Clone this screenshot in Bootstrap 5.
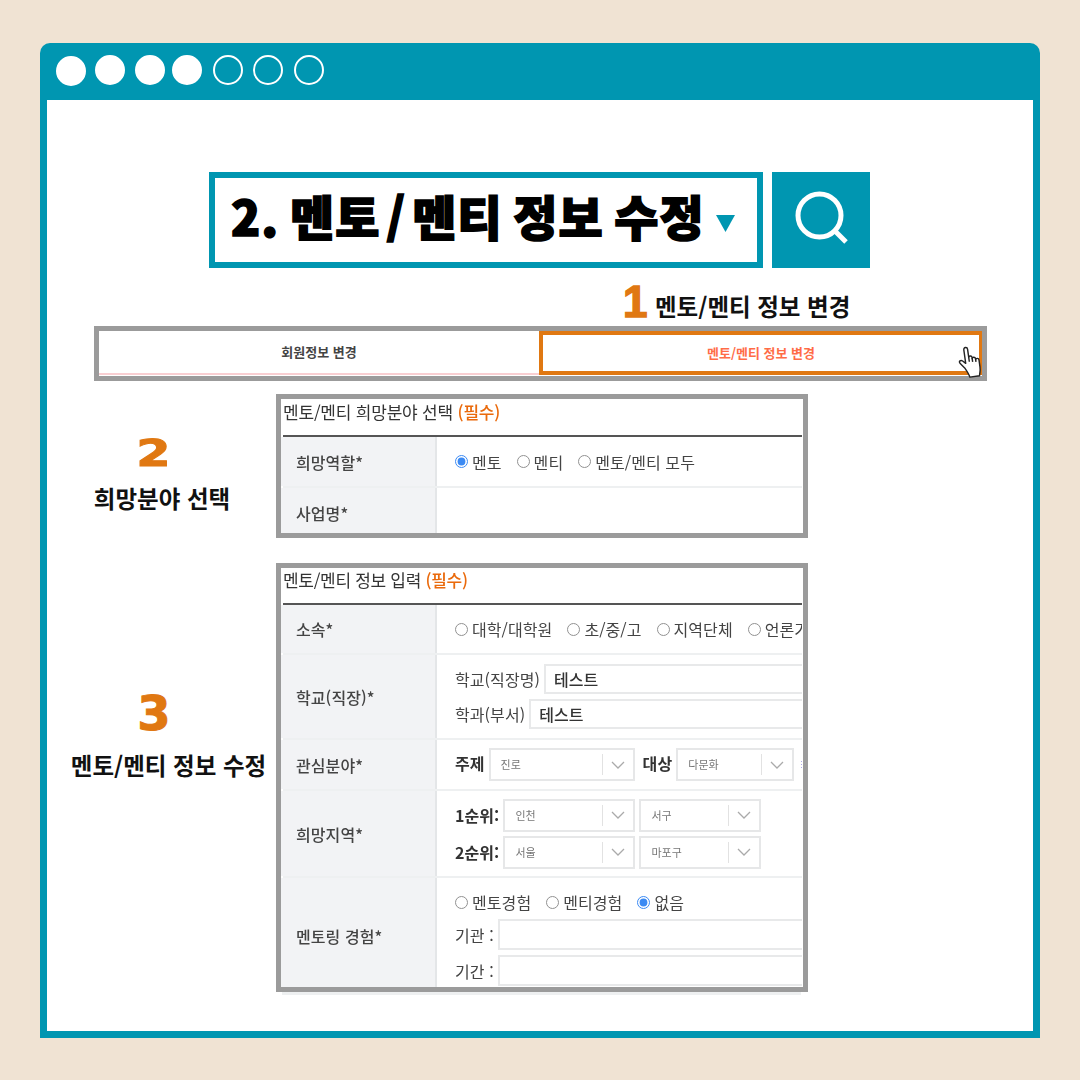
<!DOCTYPE html>
<html lang="ko">
<head>
<meta charset="utf-8">
<title>멘토/멘티 정보 수정</title>
<link href="https://cdn.jsdelivr.net/npm/bootstrap@5.3.0/dist/css/bootstrap.min.css" rel="stylesheet">
<style>
html,body{height:100%}
body{background:#f0e3d3;font-family:"Noto Sans CJK KR","Noto Sans",sans-serif;color:#333;overflow:hidden}
.frame{width:1000px;height:995px;margin:43px 0 0 40px;background:#0096b1;border-radius:10px 10px 0 0;padding:0 7px 7px}
.frame-bar{height:57px;padding:12px 0 0 9px;gap:10px}
.dot{width:30px;height:30px;border-radius:50%;background:#fff;border:2px solid #fff}
.dot.hollow{background:transparent}
.dot:nth-child(1){margin-top:1px}
.dot:nth-child(2){margin-left:-1px}
.dot:nth-child(4){margin-left:-3px}
.dot:nth-child(5),.dot:nth-child(7){margin-left:1px}
.sheet{height:931px;background:#fff;padding-top:72px}
.search-row{gap:9px;padding-right:1px}
.search-box{width:554px;height:96px;border:6px solid #0096b1;padding-left:16px}
.search-title{font-size:48px;font-weight:900;color:#000;letter-spacing:1.1px;word-spacing:-4px;-webkit-text-stroke:1.6px #000;line-height:1;white-space:nowrap;margin-top:-10px}
.slash{margin:0 6px}
.tri{width:19px;height:17px;margin-left:11px;margin-top:6px}
.search-btn{width:98px;height:96px;background:#0096b1}
.num{display:block;font-family:"DejaVu Sans",sans-serif;font-weight:700;color:#e07812;line-height:1;-webkit-text-stroke:1px #e07812}
.step-one{margin:17px 0 0 577px;height:41px}
.step-one .num{font-family:"Liberation Sans",sans-serif;font-size:44px;flex:none;width:31px;margin:-5px 1px 0 -1px;padding-right:30px;-webkit-text-stroke:1.5px #e07812}
.step-text{font-size:23.5px;font-weight:700;color:#111;line-height:1.2;white-space:nowrap}
.step-one .step-text{margin-top:7px}
.tab-bar{position:relative;width:893px;height:55px;margin-left:47px;border:5px solid #9b9b9b}
.tab-a,.tab-b{font-size:13px;font-weight:700;height:44px}
.tab-a{width:440px;color:#444;border-bottom:2px solid #f9cfd2}
.tab-b{flex:1;color:#ff6c47;border:4px solid #e07812;border-right-width:3px}
.hand{position:absolute;right:-4px;top:13px;width:29px;height:36px}
.form-line{margin-top:13px}
.form-line+.form-line{margin-top:25px}
.side{width:229px;text-align:center}
.side-a{padding-top:40px}
.side-a .num{font-size:38px;margin-right:16px;transform:scaleX(1.3)}
.side-a .step-text{margin-top:12px;padding-left:1px}
.side-b{padding-top:126px;padding-left:14px}
.side-b .num{font-size:48px;margin-right:29px}
.side-b .step-text{margin-top:14px}
.panel{width:532px;border:5px solid #9b9b9b;overflow:hidden;background:#fff}
.panel>*{filter:blur(.35px)}
.panel-a{height:144px}
.panel-b{height:429px}
.panel-title{height:36px;margin-left:2px;font-size:17px;letter-spacing:-.2px;line-height:26px;color:#333;white-space:nowrap}
.panel-b .panel-title{height:35px;line-height:24px;letter-spacing:-.3px}
.must{color:#ea6a0c;font-weight:500}
.rule{height:2px;background:#555;margin:0 1px 0 2px}
.frow{margin:0 1px 0 2px;border-bottom:2px solid #eef0f1;font-size:16px;letter-spacing:.08px;white-space:nowrap}
.fth{width:154px;flex:none;background:#f2f3f5;border-right:2px solid #e4e6e8;padding-left:13px;color:#444;font-weight:500;box-shadow:-2px 0 0 #f2f3f5}
.ftd{flex:1;min-width:0;padding-left:18px;overflow:hidden;color:#444}
.rh-50{height:50px}.rh-51{height:51px}.rh-85{height:85px}.rh-87{height:87px}
.frow.last{border-bottom:0;height:112px}
.frow.last .fth{padding-top:3px}
.frow.last .ftd{padding-top:12px}
.radio-set{gap:15px;height:24px}
.radio-item{gap:4px}
.radio-item input{width:13px;height:13px;margin:0;accent-color:#0b6df0;flex:none;opacity:.8}
.radio-item label{line-height:1}
.line-input{gap:4px;height:31px}
.fake-input{flex:1;min-width:320px;height:30px;border:2px solid #e8e9ea;border-right:0;padding-left:8px;line-height:26px;color:#333;font-weight:500}
.frow.last .fake-input{height:31px}
.gap-five{margin-bottom:5px}
.sel-row{gap:4px}
.pick{flex:none;height:33px;border:2px solid #e6e7e8;font-size:11px;color:#777;padding-left:10px}
.pick span{flex:1}
.pick i{display:block;width:1px;height:21px;background:#e2e2e2}
.pick svg{width:14px;height:8px;margin:0 8px}
.w-146{width:146px}.w-118{width:118px}.w-132{width:132px}.w-122{width:122px}
.bold-key{flex:none;font-weight:700;color:#333;font-size:16px}
.sel-top .bold-key{margin-top:-3px}
.stub{width:519px;height:3px;margin:0 6px;background:#eef0f1}
.tiny-dots{color:#a9a4e8;font-size:9px;margin-left:-1px}
</style>
</head>
<body>
<div class="frame">
  <div class="frame-bar d-flex align-items-start">
    <span class="dot"></span><span class="dot"></span><span class="dot"></span><span class="dot"></span>
    <span class="dot hollow"></span><span class="dot hollow"></span><span class="dot hollow"></span>
  </div>
  <div class="sheet">
    <div class="search-row d-flex justify-content-center">
      <div class="search-box d-flex align-items-center">
        <span class="search-title">2. 멘토<span class="slash">/</span>멘티 정보 수정</span>
        <svg class="tri" viewBox="0 0 19 17"><path d="M0 0H19L9.500 17Z" fill="#0096b1"/></svg>
      </div>
      <div class="search-btn d-flex align-items-center justify-content-center">
        <svg width="98" height="96" viewBox="0 0 98 96"><circle cx="47.500" cy="43.500" r="21.500" fill="none" stroke="#fff" stroke-width="5"/><path d="M63 59L74 70" stroke="#fff" stroke-width="5" fill="none"/></svg>
      </div>
    </div>

    <div class="step-one d-flex">
      <span class="num">1</span>
      <span class="step-text">멘토/멘티 정보 변경</span>
    </div>

    <div class="tab-bar d-flex">
      <div class="tab-a d-flex align-items-center justify-content-center">회원정보 변경</div>
      <div class="tab-b d-flex align-items-center justify-content-center">멘토/멘티 정보 변경</div>
      <svg class="hand" viewBox="0 0 26 33">
        <g transform="rotate(-8 13 16)" fill="#fff" stroke="#222" stroke-width="1.300" stroke-linejoin="round">
          <path d="M6 21L2.500 16.500C1 14 3.500 13 5 14.500L7.500 17V4.500C7.500 2 11 2 11 4.500V12C11 10.500 14 10.500 14 12.500V13.500C14 12 17 12 17 14V15C17 13.500 20 13.500 20 15.500V22C20 26 19 27 18.500 30H9.500C9 27 7.500 24 6 21Z"/>
          <path d="M11 12V16M14 13V16.500M17 14.500V17" fill="none"/>
        </g>
      </svg>
    </div>

    <div class="form-line d-flex">
      <div class="side side-a">
        <div class="num">2</div>
        <div class="step-text">희망분야 선택</div>
      </div>
      <div class="panel panel-a">
        <div class="panel-title">멘토/멘티 희망분야 선택 <span class="must">(필수)</span></div>
        <div class="rule"></div>
        <div class="frow rh-51 d-flex">
          <div class="fth d-flex align-items-center">희망역할*</div>
          <div class="ftd d-flex align-items-center">
            <div class="radio-set d-flex align-items-center">
              <div class="radio-item d-flex align-items-center"><input type="radio" name="r1" id="r11" checked><label for="r11">멘토</label></div>
              <div class="radio-item d-flex align-items-center"><input type="radio" name="r1" id="r12"><label for="r12">멘티</label></div>
              <div class="radio-item d-flex align-items-center"><input type="radio" name="r1" id="r13"><label for="r13">멘토/멘티 모두</label></div>
            </div>
          </div>
        </div>
        <div class="frow rh-51 d-flex">
          <div class="fth d-flex align-items-center">사업명*</div>
          <div class="ftd"></div>
        </div>
      </div>
    </div>

    <div class="form-line d-flex">
      <div class="side side-b">
        <div class="num">3</div>
        <div class="step-text">멘토/멘티 정보 수정</div>
      </div>
      <div>
        <div class="panel panel-b">
          <div class="panel-title">멘토/멘티 정보 입력 <span class="must">(필수)</span></div>
          <div class="rule"></div>
          <div class="frow rh-50 d-flex">
            <div class="fth d-flex align-items-center">소속*</div>
            <div class="ftd d-flex align-items-center">
              <div class="radio-set d-flex align-items-center">
                <div class="radio-item d-flex align-items-center"><input type="radio" name="r2"><label>대학/대학원</label></div>
                <div class="radio-item d-flex align-items-center"><input type="radio" name="r2"><label>초/중/고</label></div>
                <div class="radio-item d-flex align-items-center"><input type="radio" name="r2"><label>지역단체</label></div>
                <div class="radio-item d-flex align-items-center"><input type="radio" name="r2"><label>언론기관</label></div>
              </div>
            </div>
          </div>
          <div class="frow rh-85 d-flex">
            <div class="fth d-flex align-items-center">학교(직장)*</div>
            <div class="ftd d-flex flex-column justify-content-center gap-1">
              <div class="line-input d-flex align-items-center"><span>학교(직장명)</span><div class="fake-input">테스트</div></div>
              <div class="line-input d-flex align-items-center"><span>학과(부서)</span><div class="fake-input">테스트</div></div>
            </div>
          </div>
          <div class="frow rh-51 d-flex">
            <div class="fth d-flex align-items-center">관심분야*</div>
            <div class="ftd d-flex align-items-center sel-row sel-top">
              <span class="bold-key">주제</span>
              <div class="pick w-146 d-flex align-items-center"><span>진로</span><i></i><svg viewBox="0 0 14 8"><path d="M1 1L7 7L13 1" fill="none" stroke="#aaa" stroke-width="1.300"/></svg></div>
              <span class="bold-key ms-1">대상</span>
              <div class="pick w-118 d-flex align-items-center"><span>다문화</span><i></i><svg viewBox="0 0 14 8"><path d="M1 1L7 7L13 1" fill="none" stroke="#aaa" stroke-width="1.300"/></svg></div>
              <span class="tiny-dots">⋮</span>
            </div>
          </div>
          <div class="frow rh-87 d-flex">
            <div class="fth d-flex align-items-center">희망지역*</div>
            <div class="ftd d-flex flex-column justify-content-center gap-1">
              <div class="d-flex align-items-center sel-row">
                <span class="bold-key">1순위:</span>
                <div class="pick w-132 d-flex align-items-center"><span>인천</span><i></i><svg viewBox="0 0 14 8"><path d="M1 1L7 7L13 1" fill="none" stroke="#aaa" stroke-width="1.300"/></svg></div>
                <div class="pick w-122 d-flex align-items-center"><span>서구</span><i></i><svg viewBox="0 0 14 8"><path d="M1 1L7 7L13 1" fill="none" stroke="#aaa" stroke-width="1.300"/></svg></div>
              </div>
              <div class="d-flex align-items-center sel-row">
                <span class="bold-key">2순위:</span>
                <div class="pick w-132 d-flex align-items-center"><span>서울</span><i></i><svg viewBox="0 0 14 8"><path d="M1 1L7 7L13 1" fill="none" stroke="#aaa" stroke-width="1.300"/></svg></div>
                <div class="pick w-122 d-flex align-items-center"><span>마포구</span><i></i><svg viewBox="0 0 14 8"><path d="M1 1L7 7L13 1" fill="none" stroke="#aaa" stroke-width="1.300"/></svg></div>
              </div>
            </div>
          </div>
          <div class="frow last d-flex">
            <div class="fth d-flex align-items-center">멘토링 경험*</div>
            <div class="ftd">
              <div class="radio-set d-flex align-items-center gap-five">
                <div class="radio-item d-flex align-items-center"><input type="radio" name="r3"><label>멘토경험</label></div>
                <div class="radio-item d-flex align-items-center"><input type="radio" name="r3"><label>멘티경험</label></div>
                <div class="radio-item d-flex align-items-center"><input type="radio" name="r3" checked><label>없음</label></div>
              </div>
              <div class="line-input d-flex align-items-center gap-five"><span>기관 :</span><div class="fake-input"></div></div>
              <div class="line-input d-flex align-items-center"><span>기간 :</span><div class="fake-input"></div></div>
            </div>
          </div>
        </div>
        <div class="stub"></div>
      </div>
    </div>
  </div>
</div>
<script src="https://cdn.jsdelivr.net/npm/bootstrap@5.3.0/dist/js/bootstrap.bundle.min.js"></script>
</body>
</html>
